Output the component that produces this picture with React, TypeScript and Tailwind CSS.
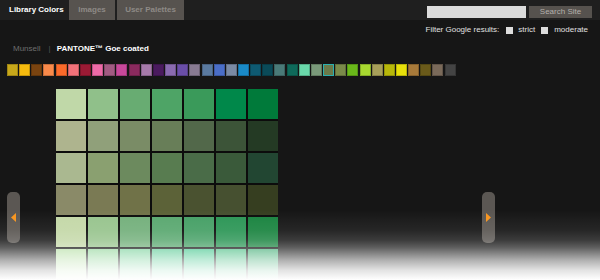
import React from "react";

const swatches = [
  "#c8a81a", "#f6bb0e", "#7a4410", "#f98a4a", "#fb6a2a", "#f2727a", "#9a1a34", "#ee6aa8",
  "#a25a82", "#c8489a", "#8a2a5e", "#a67aaa", "#4a1a5e", "#8a6ab0", "#6a4ea8", "#887a92",
  "#5a7aa0", "#4a6ec8", "#7a8aa4", "#1a8ac8", "#0e5a72", "#0a4a58", "#4a7a78", "#0e6a5a",
  "#6ad8aa", "#7a9a7a", "#6a7a4a", "#7a8a4a", "#6ab81a", "#a8d830", "#a8a05a", "#b8b80a",
  "#e8e00a", "#a87a3a", "#6a5a1a", "#7a6a5a", "#444444",
];

const grid = [
  ["#c0d8a8", "#90c08a", "#68ac72", "#4ea466", "#3a9a5a", "#00884a", "#007a3a"],
  ["#aeb48e", "#90a07a", "#7a8c66", "#687e58", "#52684a", "#3c5438", "#243a24"],
  ["#aab890", "#8aa070", "#6c8a5e", "#587c50", "#4a6c48", "#3a5a3a", "#224632"],
  ["#8a8a68", "#7a7a54", "#707248", "#5c6238", "#4a5230", "#465030", "#363e20"],
  ["#c4d8a8", "#98c48e", "#74b07c", "#5aa870", "#46a066", "#2c9656", "#1a8440"],
  ["#b8e0a8", "#98d8a0", "#80d4a0", "#60cc98", "#48c890", "#50c088", "#48b07a"],
];

export default function App() {
  return (
    <div
      className="relative w-[600px] h-[280px] overflow-hidden bg-[#161616]"
      style={{ fontFamily: '"Liberation Sans", Arial, sans-serif' }}
    >
      {/* top bar */}
      <div className="flex h-[20px] items-stretch justify-between bg-[#1f1f1f]">
        <div className="flex items-stretch text-[8px] font-bold leading-none">
          <div className="flex w-[68px] items-center pl-[9px] text-white">Library Colors</div>
          <div className="ml-[1px] flex w-[46px] items-center justify-center bg-[#57534f] text-[#8e8a86]">Images</div>
          <div className="ml-[2px] flex w-[67px] items-center justify-center bg-[#57534f] text-[#8e8a86]">User Palettes</div>
        </div>
        <div className="flex items-start pt-[6px] pr-[8px]">
          <div className="h-[12px] w-[99px] bg-[#dcdcdc]" />
          <div className="ml-[3px] flex h-[12px] w-[63px] items-center justify-center bg-[#56524e] text-[8px] leading-none text-[#b4b0ac]">
            Search Site
          </div>
        </div>
      </div>

      {/* filter row */}
      <div className="mt-[6px] flex h-[8px] items-center justify-end pr-[12px] text-[8px] leading-none text-[#e0e0e0]">
        <span>Filter Google results:</span>
        <span className="ml-[7px] h-[7px] w-[7px] bg-[#dddddd]" />
        <span className="ml-[5px]">strict</span>
        <span className="ml-[6px] h-[7px] w-[7px] bg-[#dddddd]" />
        <span className="ml-[6px]">moderate</span>
      </div>

      {/* library selector */}
      <div className="mt-[11px] flex h-[8px] items-center pl-[13px] text-[8px] leading-none">
        <span className="text-[#6e6e6e]">Munsell</span>
        <span className="ml-[8px] text-[#555555]">|</span>
        <span className="ml-[6px] font-bold text-white">PANTONE™ Goe coated</span>
      </div>

      {/* swatch strip */}
      <div className="mt-[11px] ml-[7px] flex w-[449px] justify-between">
        {swatches.map((c, i) => (
          <div
            key={i}
            className={
              i === 26
                ? "h-[12px] w-[11px] border border-[#2ab0b0]"
                : "h-[12px] w-[11px] border border-black/20"
            }
            style={{ backgroundColor: c }}
          />
        ))}
      </div>

      {/* color grid */}
      <div className="mt-[13px] ml-[56px] grid w-[222px] grid-cols-7 gap-[2px] bg-[#0c0c0c]">
        {grid.flat().map((c, i) => (
          <div key={i} className="h-[30px] w-[30px]" style={{ backgroundColor: c }} />
        ))}
      </div>

      {/* nav buttons */}
      <div className="absolute left-[7px] top-[192px] flex h-[51px] w-[13px] items-center justify-center rounded-[5px] bg-[#5b5753]">
        <svg width="5" height="9" viewBox="0 0 5 9">
          <polygon points="5,0 0,4.5 5,9" fill="#f7941d" />
        </svg>
      </div>
      <div className="absolute left-[482px] top-[192px] flex h-[51px] w-[13px] items-center justify-center rounded-[5px] bg-[#5b5753]">
        <svg width="5" height="9" viewBox="0 0 5 9">
          <polygon points="0,0 5,4.5 0,9" fill="#f7941d" />
        </svg>
      </div>

      {/* bottom fade */}
      <div
        className="pointer-events-none absolute bottom-0 left-0 h-[70px] w-full"
        style={{
          background:
            "linear-gradient(to bottom, rgba(255,255,255,0) 0%, rgba(255,255,255,0.07) 29%, rgba(255,255,255,0.16) 43%, rgba(255,255,255,0.3) 53%, rgba(255,255,255,0.65) 71%, rgba(255,255,255,0.88) 86%, rgba(255,255,255,1) 100%)",
        }}
      />
    </div>
  );
}
